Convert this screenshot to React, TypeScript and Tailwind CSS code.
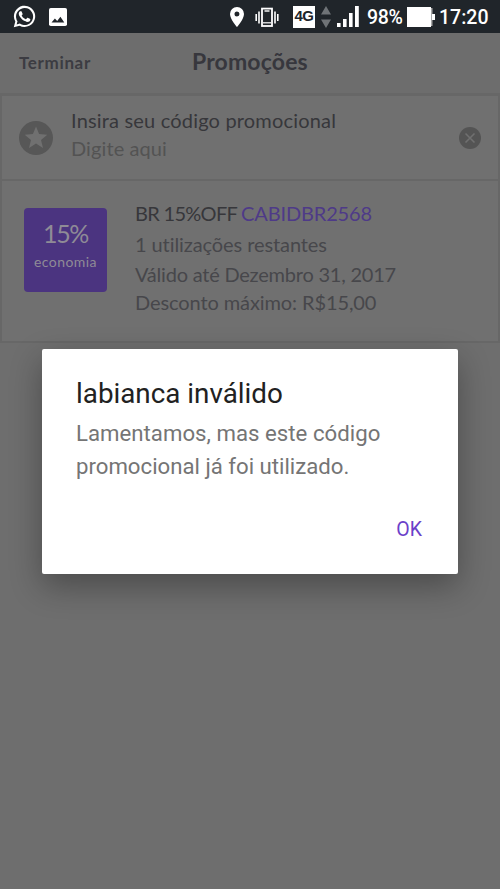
import type { ReactNode } from "react";

const brand = "font-['Lato','Open_Sans',sans-serif]";

function Line({ className, children }: { className: string; children: ReactNode }) {
  return <div className={`whitespace-nowrap ${className}`}>{children}</div>;
}

function StatusBar() {
  return (
    <div className="flex h-[33px] items-center bg-[#20252a] font-['Roboto',sans-serif] text-white">
      <svg className="ml-[13px] h-[23px] w-[23px] shrink-0" viewBox="0 0 24 24" fill="#fff">
        <path d="M17.472 14.382c-.297-.149-1.758-.867-2.03-.967-.273-.099-.471-.148-.67.15-.197.297-.767.966-.94 1.164-.173.199-.347.223-.644.075-.297-.15-1.255-.463-2.39-1.475-.883-.788-1.48-1.761-1.653-2.059-.173-.297-.018-.458.13-.606.134-.133.298-.347.446-.52.149-.174.198-.298.298-.497.099-.198.05-.371-.025-.52-.075-.149-.669-1.612-.916-2.207-.242-.579-.487-.5-.669-.51-.173-.008-.371-.01-.57-.01-.198 0-.52.074-.792.372-.272.297-1.04 1.016-1.04 2.479 0 1.462 1.065 2.875 1.213 3.074.149.198 2.096 3.2 5.077 4.487.709.306 1.262.489 1.694.625.712.227 1.36.195 1.871.118.571-.085 1.758-.719 2.006-1.413.248-.694.248-1.289.173-1.413-.074-.124-.272-.198-.57-.347z" />
        <path fillRule="evenodd" d="M.8 23.2l1.6-5.9A11.1 11.1 0 1 1 6.8 21.6zM7.1 19.4A8.9 8.9 0 1 0 4.7 17l-.9 3.3z" />
      </svg>
      <svg className="ml-[13px] h-[18px] w-[18px] shrink-0" viewBox="0 0 18 18">
        <rect width="18" height="18" rx="1.8" fill="#fff" />
        <path d="M2.5 14.5l3.4-4 2.3 2.5 3.2-4.2 3.9 5.7z" fill="#20252a" />
      </svg>
      <svg className="ml-[163px] h-[20px] w-[14px] shrink-0" viewBox="0 0 14 20">
        <path fillRule="evenodd" d="M7 0a7 7 0 0 0-7 7c0 5.2 7 13 7 13s7-7.8 7-13a7 7 0 0 0-7-7zm0 9.5a2.5 2.5 0 1 1 0-5 2.5 2.5 0 0 1 0 5z" fill="#fff" />
      </svg>
      <svg className="ml-[11px] h-[20px] w-[24px] shrink-0" viewBox="0 0 24 20" fill="none" stroke="#fff">
        <rect x="7" y="1.6" width="10" height="17.4" strokeWidth="1.8" />
        <path d="M9.5 4h5" strokeWidth="1.4" />
        <path d="M8 15.8h8" strokeWidth="1.2" />
        <path d="M4 4.5v12M20 4.5v12M1.2 7v7M22.8 7v7" strokeWidth="1.6" />
      </svg>
      <div className="ml-[14px] flex h-[22px] w-[22px] shrink-0 items-center justify-center bg-white font-['Liberation_Sans',sans-serif] text-[15px] font-bold tracking-[-0.5px] text-[#20252a]">4G</div>
      <svg className="ml-[6px] h-[22px] w-[10px] shrink-0" viewBox="0 0 10 22" fill="#6f7377">
        <path d="M5 0l5 8.5H0zM5 22l5-8.5H0z" />
      </svg>
      <svg className="ml-[6px] h-[21px] w-[22px] shrink-0" viewBox="0 0 22 21" fill="#fff">
        <path d="M0 17h3.6v4H0zM6 13h3.6v8H6zM12 7h3.6v14H12zM18 0h3.8v21H18z" />
      </svg>
      <Line className="ml-[8px] w-[37px] pt-[2px] text-[19.5px] font-medium tracking-[-0.3px]">98%</Line>
      <svg className="ml-[3px] h-[20px] w-[29px] shrink-0" viewBox="0 0 29 20">
        <path d="M0 0h24v20H0z" fill="#fff" />
        <path d="M24 1h1.5v18H24z" fill="#aaa" />
        <path d="M25 7h3v6h-3z" fill="#fff" />
      </svg>
      <Line className="ml-[3px] pt-[2px] text-[19.5px] font-medium">17:20</Line>
    </div>
  );
}

function Dialog() {
  return (
    <div className="absolute top-[349px] left-[42px] flex h-[225px] w-[416px] flex-col rounded-[2px] bg-white pt-[28px] pr-[36px] pl-[34px] font-['Roboto',sans-serif] shadow-[0_12px_32px_0_rgba(0,0,0,0.32)]">
      <Line className="text-[27.8px] leading-[34px] text-[#212121]">labianca inválido</Line>
      <Line className="mt-[6px] text-[22.2px] leading-[33px] tracking-[0.02px] text-[#757575]">Lamentamos, mas este código</Line>
      <Line className="text-[22.2px] leading-[33px] text-[#757575]">promocional já foi utilizado.</Line>
      <button className="mt-[32px] self-end text-[19.5px] leading-[30px] text-[#6b3fc9]">OK</button>
    </div>
  );
}

export default function App() {
  return (
    <div className={`relative h-[889px] w-[500px] overflow-hidden bg-[#6e6e6e] ${brand}`}>
      <StatusBar />
      <header className="grid h-[60px] grid-cols-[173px_154px_173px] items-center bg-[#6d6d6d] text-[#3c3c42]">
        <Line className="pl-[19px] text-[17px] font-bold tracking-[0.65px]">Terminar</Line>
        <Line className="pb-[3px] pl-[19px] text-[23px] font-bold tracking-[0.15px] text-[#37373d]">Promoções</Line>
      </header>
      <section className="h-[250px] border-x-2 border-t-[3px] border-b-2 border-[#676767] bg-[#707070]">
        <div className="flex h-[85px] items-center border-b-2 border-[#676767]">
          <svg className="ml-[17px] h-[34px] w-[34px] shrink-0" viewBox="0 0 34 34">
            <circle cx="17" cy="17" r="17" fill="#575757" />
            <path d="M17 5.5l3.1 7.6 8.2.6-6.3 5.3 2 8L17 22.6 10 27l2-8-6.3-5.3 8.2-.6z" fill="#707070" />
          </svg>
          <div className="ml-[18px] w-[380px] pb-[7px]">
            <Line className="text-[20px] leading-[28px] tracking-[0.18px] text-[#37373b]">Insira seu código promocional</Line>
            <Line className="text-[20px] leading-[28px] tracking-[0.1px] text-[#535353]">Digite aqui</Line>
          </div>
          <svg className="ml-[8px] h-[22px] w-[22px] shrink-0" viewBox="0 0 22 22">
            <circle cx="11" cy="11" r="11" fill="#545454" />
            <path d="M6.5 6.5l9 9m0-9l-9 9" stroke="#707070" strokeWidth="1.6" />
          </svg>
        </div>
        <div className="flex items-start">
          <div className="mt-[27px] ml-[22px] flex h-[84px] w-[83px] shrink-0 flex-col items-center rounded-[4px] bg-[#4b3480] pt-[11px] text-[#8f8b96]">
            <Line className="text-[25px] leading-[28px] tracking-[-1.4px]">15%</Line>
            <Line className="mt-[5px] text-[14px] leading-[20px] tracking-[0.45px]">economia</Line>
          </div>
          <div className="mt-[17px] ml-[28px] text-[20px] text-[#47474b]">
            <Line className="leading-[31px] tracking-[-0.7px] text-[#37373b]">BR 15%OFF <span className="tracking-[-0.15px] text-[#4e3a88]">CABIDBR2568</span></Line>
            <Line className="leading-[31px] tracking-[-0.09px]">1 utilizações restantes</Line>
            <Line className="leading-[29px] tracking-[-0.22px]">Válido até Dezembro 31, 2017</Line>
            <Line className="leading-[27px] tracking-[-0.1px]">Desconto máximo: R$15,00</Line>
          </div>
        </div>
      </section>
      <Dialog />
    </div>
  );
}
